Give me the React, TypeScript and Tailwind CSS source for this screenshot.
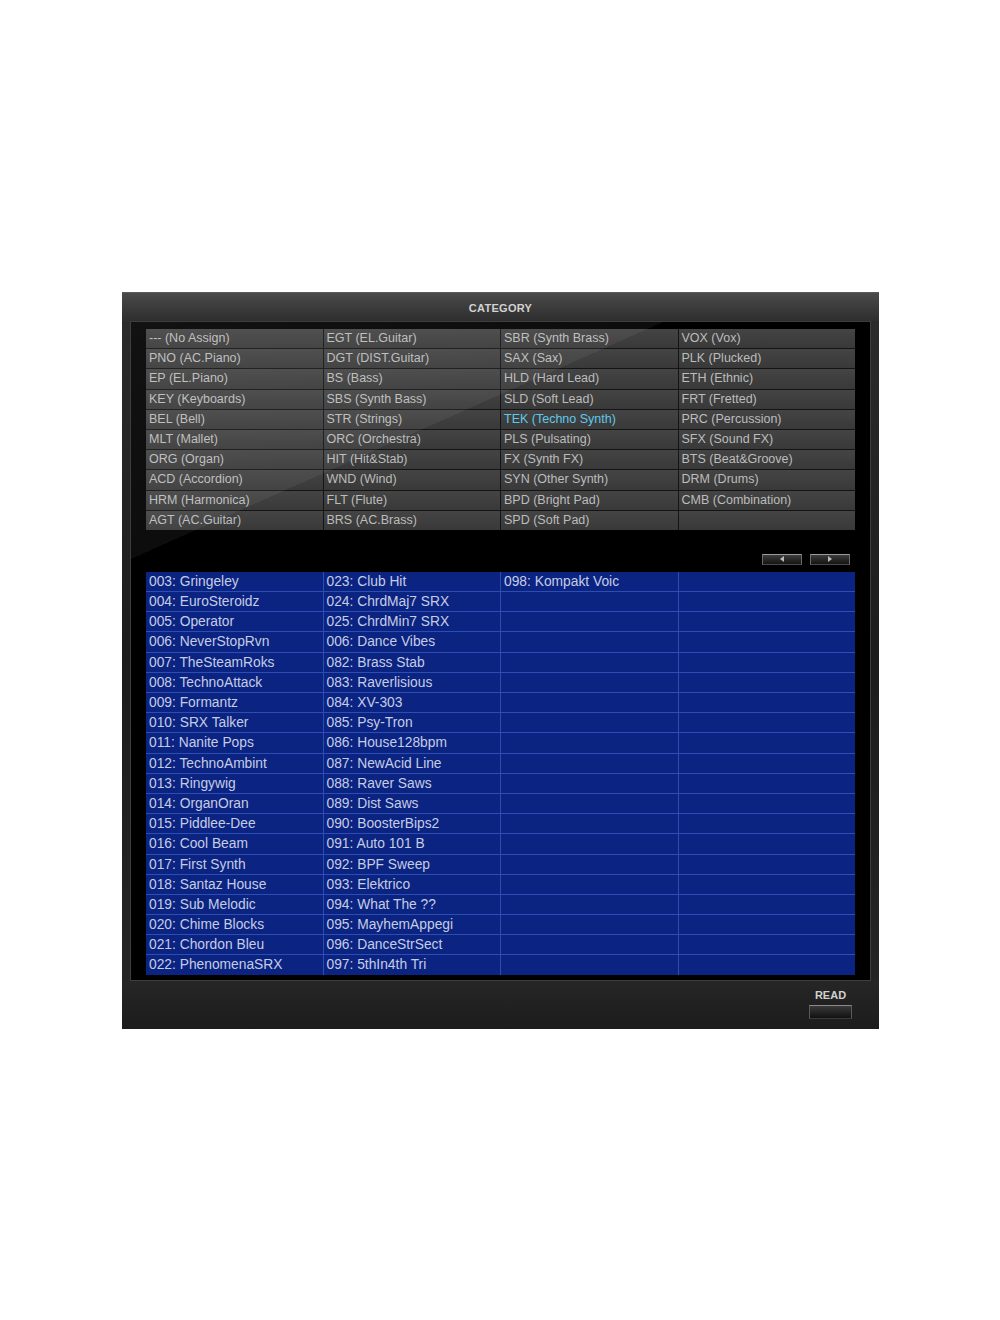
import { ReactNode } from 'react';

const categories: string[] = [
  '--- (No Assign)', 'EGT (EL.Guitar)', 'SBR (Synth Brass)', 'VOX (Vox)',
  'PNO (AC.Piano)', 'DGT (DIST.Guitar)', 'SAX (Sax)', 'PLK (Plucked)',
  'EP (EL.Piano)', 'BS (Bass)', 'HLD (Hard Lead)', 'ETH (Ethnic)',
  'KEY (Keyboards)', 'SBS (Synth Bass)', 'SLD (Soft Lead)', 'FRT (Fretted)',
  'BEL (Bell)', 'STR (Strings)', 'TEK (Techno Synth)', 'PRC (Percussion)',
  'MLT (Mallet)', 'ORC (Orchestra)', 'PLS (Pulsating)', 'SFX (Sound FX)',
  'ORG (Organ)', 'HIT (Hit&Stab)', 'FX (Synth FX)', 'BTS (Beat&Groove)',
  'ACD (Accordion)', 'WND (Wind)', 'SYN (Other Synth)', 'DRM (Drums)',
  'HRM (Harmonica)', 'FLT (Flute)', 'BPD (Bright Pad)', 'CMB (Combination)',
  'AGT (AC.Guitar)', 'BRS (AC.Brass)', 'SPD (Soft Pad)', '',
];

const col1 = [
  '003: Gringeley', '004: EuroSteroidz', '005: Operator', '006: NeverStopRvn',
  '007: TheSteamRoks', '008: TechnoAttack', '009: Formantz', '010: SRX Talker',
  '011: Nanite Pops', '012: TechnoAmbint', '013: Ringywig', '014: OrganOran',
  '015: Piddlee-Dee', '016: Cool Beam', '017: First Synth', '018: Santaz House',
  '019: Sub Melodic', '020: Chime Blocks', '021: Chordon Bleu', '022: PhenomenaSRX',
];

const col2 = [
  '023: Club Hit', '024: ChrdMaj7 SRX', '025: ChrdMin7 SRX', '006: Dance Vibes',
  '082: Brass Stab', '083: Raverlisious', '084: XV-303', '085: Psy-Tron',
  '086: House128bpm', '087: NewAcid Line', '088: Raver Saws', '089: Dist Saws',
  '090: BoosterBips2', '091: Auto 101 B', '092: BPF Sweep', '093: Elektrico',
  '094: What The ??', '095: MayhemAppegi', '096: DanceStrSect', '097: 5thIn4th Tri',
];

const ArrowButton = ({ children }: { children: ReactNode }) => (
  <div className="w-[40px] h-[11px] border border-t-[#9a9a9a] border-x-[#6a6a6a] border-b-[#4a4a4a] bg-gradient-to-b from-[#3c3c3c] to-[#151515] flex items-center justify-center">
    {children}
  </div>
);

const App = () => {
  return (
    <div className="min-h-[1320px] bg-white pt-[292px] pl-[122px] font-['Liberation_Sans',Arial,sans-serif]">
      <div className="w-[757px] h-[737px] flex flex-col bg-gradient-to-b from-[#2c2c2c] via-[#1c1c1c] to-[#262626] border-t border-[#5a5a5a]">
        {/* Title */}
        <div className="h-[28px] pt-[3px] flex items-center justify-center bg-gradient-to-b from-[#4a4a4a] to-[#2e2e2e] text-[11px] font-bold tracking-wide text-[#d2d2d2]">
          CATEGORY
        </div>

        {/* Screen */}
        <div className="relative mx-[8px] h-[660px] border border-[#3e3e3e] bg-black px-[15px] pt-[7px]">
          <div className="grid grid-cols-4 gap-px bg-[#141414] text-[12.5px] text-[#bcbcbc]">
            {categories.map((c, i) => (
              <div
                key={i}
                className={`h-[19.2px] leading-[19px] pl-[3px] whitespace-nowrap bg-gradient-to-b from-[#444444] to-[#393939] ${
                  c.startsWith('TEK') ? 'text-[#5fc9ec]' : ''
                }`}
              >
                {c}
              </div>
            ))}
          </div>

          <div className="flex justify-end gap-[8px] pr-[5px] mt-[24px] h-[11px]">
            <ArrowButton>
              <span className="w-0 h-0 border-y-[3px] border-y-transparent border-r-[4px] border-r-[#b8b8b8]" />
            </ArrowButton>
            <ArrowButton>
              <span className="w-0 h-0 border-y-[3px] border-y-transparent border-l-[4px] border-l-[#b8b8b8]" />
            </ArrowButton>
          </div>

          <div className="mt-[7px] grid grid-cols-4 gap-px bg-[#2d4db4] text-[13.8px] text-[#c6cce4]">
            {col1.map((_, r) => (
              <>
                <div key={`a${r}`} className="h-[19.2px] leading-[19px] pl-[3px] whitespace-nowrap bg-[#0b2482]">{col1[r]}</div>
                <div key={`b${r}`} className="h-[19.2px] leading-[19px] pl-[3px] whitespace-nowrap bg-[#0b2482]">{col2[r]}</div>
                <div key={`c${r}`} className="h-[19.2px] leading-[19px] pl-[3px] whitespace-nowrap bg-[#0b2482]">{r === 0 ? '098: Kompakt Voic' : ''}</div>
                <div key={`d${r}`} className="h-[19.2px] bg-[#0b2482]" />
              </>
            ))}
          </div>

          {/* glass sheen */}
          <div className="pointer-events-none absolute inset-0 bg-[linear-gradient(156deg,rgba(255,255,255,0.07)_0%,rgba(255,255,255,0.05)_24%,transparent_24%)]" />
        </div>

        {/* Bottom */}
        <div className="flex-1 flex justify-end pr-[27px] pt-[8px] bg-gradient-to-b from-[#262626] to-[#1c1c1c]">
          <div className="flex flex-col items-center w-[43px]">
            <span className="text-[11px] font-bold text-[#d0d0d0] leading-[12px]">READ</span>
            <div className="mt-[4px] w-[43px] h-[14px] border border-t-[#8a8a8a] border-x-[#5a5a5a] border-b-[#3a3a3a] bg-gradient-to-b from-[#3a3a3a] to-[#121212]" />
          </div>
        </div>
      </div>
    </div>
  );
};

export default App;
